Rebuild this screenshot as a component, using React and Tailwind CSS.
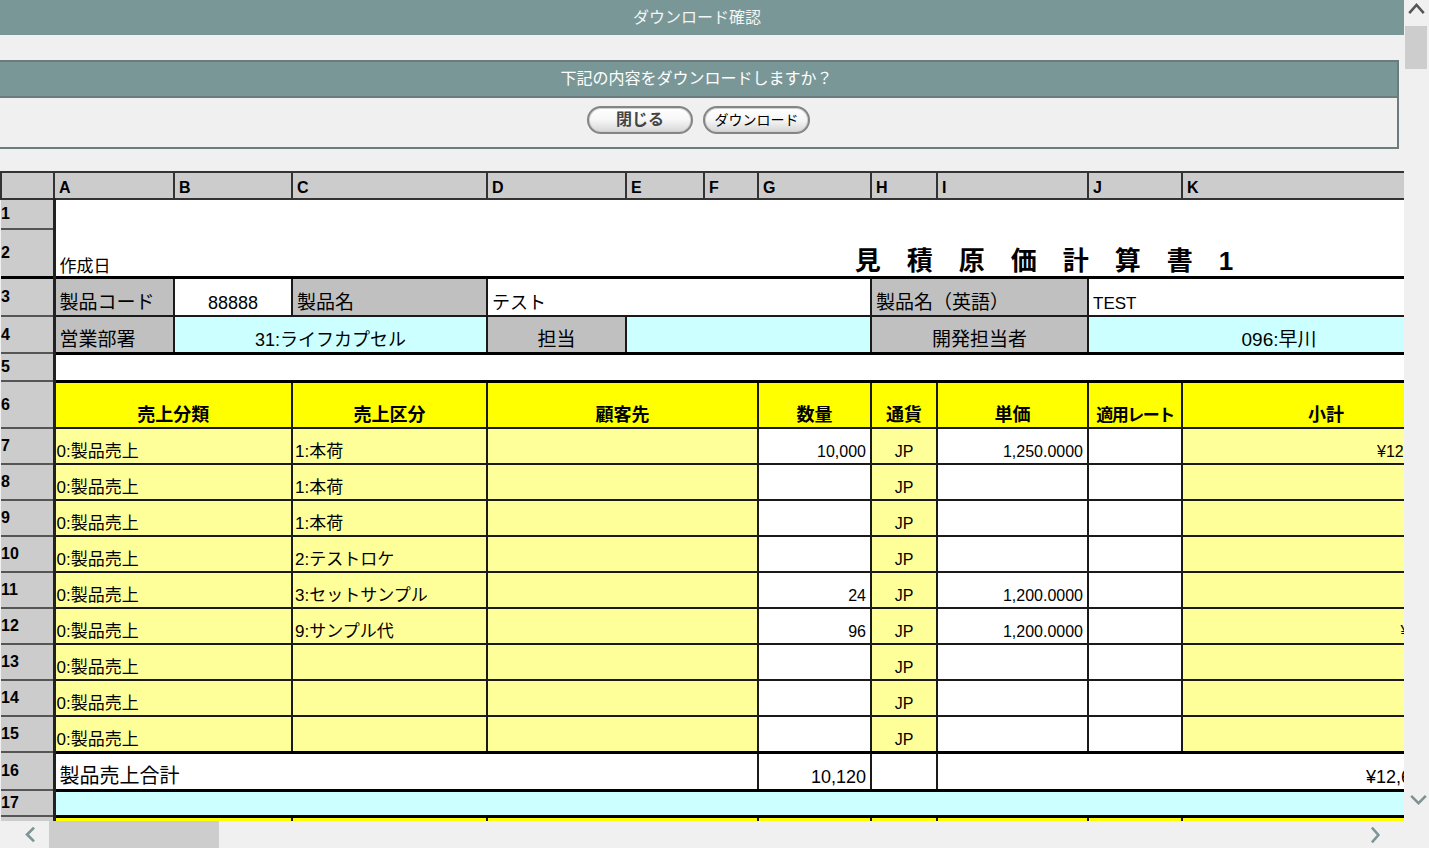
const LETTERS = ["A", "B", "C", "D", "E", "F", "G", "H", "I", "J", "K"];

const LINES = [
  ["0:製品売上", "1:本荷", "10,000", "1,250.0000", "¥12,500,000"],
  ["0:製品売上", "1:本荷", "", "", ""],
  ["0:製品売上", "1:本荷", "", "", ""],
  ["0:製品売上", "2:テストロケ", "", "", ""],
  ["0:製品売上", "3:セットサンプル", "24", "1,200.0000", "¥28,800"],
  ["0:製品売上", "9:サンプル代", "96", "1,200.0000", "¥115,200"],
  ["0:製品売上", "", "", "", ""],
  ["0:製品売上", "", "", "", ""],
  ["0:製品売上", "", "", "", ""],
];

const cell = "border-2 border-[#1a1a1a] align-bottom px-[4px] pb-[3px] leading-none whitespace-nowrap overflow-hidden";
const gray = "bg-[#c0c0c0]";
const cyan = "bg-[#ccffff]";
const yellow = "bg-[#ffff00]";
const pale = "bg-[#ffff99]";

function RowHead({ n }) {
  return (
    <td className="bg-[#cccccc] border-y-2 border-y-[#555] border-r-[3px] border-r-[#222] pl-0 text-[16px] font-bold align-middle leading-none">
      {n}
    </td>
  );
}

function Chevron({ d, className }) {
  return (
    <svg viewBox="0 0 20 20" className={className} fill="none" strokeLinecap="square" strokeLinejoin="miter">
      <polyline points={d} stroke="currentColor" strokeWidth="3.2" />
    </svg>
  );
}

export default function App() {
  return (
    <div className="w-[1429px] h-[848px] flex overflow-hidden bg-[#f0f0f0] font-['Liberation_Sans','Noto_Sans_CJK_JP',sans-serif]">
      <div className="flex-1 min-w-0 flex flex-col">
        <div className="flex-1 min-h-0 overflow-hidden">

          {/* title bar */}
          <div className="h-[35px] bg-[#7a9797] flex items-center justify-center pr-[10px] text-[16px] text-[#f4f4f4]">
            ダウンロード確認
          </div>
          <div className="h-[25px]" />

          {/* confirm box */}
          <div className="mr-[5px] border-y-2 border-r-2 border-[#6c7c7c]">
            <div className="h-[36px] bg-[#7a9797] border-b-2 border-[#6c7c7c] flex items-center justify-center pr-[4px] text-[16px] text-white">
              下記の内容をダウンロードしますか？
            </div>
            <div className="h-[49px] flex justify-center gap-[10px] pt-[8px]">
              <button className="w-[106px] h-[28px] rounded-full border-2 border-[#858585] bg-linear-to-b from-white via-[#f6f6f6] to-[#d6d6d6] shadow-[inset_0_0_0_1px_#d0d0d0] text-[16px] font-bold text-[#444] leading-none">
                閉じる
              </button>
              <button className="w-[107px] h-[28px] rounded-full border-2 border-[#858585] bg-linear-to-b from-white via-[#f6f6f6] to-[#d6d6d6] shadow-[inset_0_0_0_1px_#d0d0d0] text-[14px] text-black leading-none">
                ダウンロード
              </button>
            </div>
          </div>
          <div className="h-[22px]" />

          {/* sheet */}
          <table className="table-fixed border-collapse w-[1469px] text-black">
            <colgroup>
              <col className="w-[53px]" />
              <col className="w-[120px]" />
              <col className="w-[118px]" />
              <col className="w-[195px]" />
              <col className="w-[139px]" />
              <col className="w-[78px]" />
              <col className="w-[54px]" />
              <col className="w-[113px]" />
              <col className="w-[66px]" />
              <col className="w-[151px]" />
              <col className="w-[94px]" />
              <col className="w-[288px]" />
            </colgroup>
            <tbody>
              <tr className="h-[27px]">
                <td className="bg-[#cccccc] border-2 border-[#333]" />
                {LETTERS.map((l) => (
                  <td key={l} className="bg-[#cccccc] border-2 border-[#333] pl-[4px] pt-[5px] text-[16px] font-bold leading-none align-middle">
                    {l}
                  </td>
                ))}
              </tr>

              <tr className="h-[30px]">
                <RowHead n="1" />
                <td colSpan={11} className="bg-white" />
              </tr>

              <tr className="h-[48px]">
                <RowHead n="2" />
                <td colSpan={4} className="bg-white align-bottom px-[4px] pb-[1px] text-[17px] leading-none">作成日</td>
                <td colSpan={7} className="bg-white align-bottom text-center pr-[8px] pb-[2px] text-[26px] font-bold leading-none">
                  見　積　原　価　計　算　書　1
                </td>
              </tr>

              <tr className="h-[39px] border-t-[3px] border-t-black">
                <RowHead n="3" />
                <td className={`${cell} ${gray} border-t-[3px] border-t-black text-[19px] pb-0`}>製品コード</td>
                <td className={`${cell} bg-white border-t-[3px] border-t-black text-center text-[18px] pb-[1px]`}>88888</td>
                <td className={`${cell} ${gray} border-t-[3px] border-t-black text-[19px] pb-0`}>製品名</td>
                <td colSpan={4} className={`${cell} bg-white border-t-[3px] border-t-black text-[18px] pb-0`}>テスト</td>
                <td colSpan={2} className={`${cell} ${gray} border-t-[3px] border-t-black text-[19px] pb-0`}>製品名（英語）</td>
                <td colSpan={2} className={`${cell} bg-white border-t-[3px] border-t-black text-[17px] pb-[1px]`}>TEST</td>
              </tr>

              <tr className="h-[37px]">
                <RowHead n="4" />
                <td className={`${cell} ${gray} border-b-[3px] border-b-black text-[19px] pb-0`}>営業部署</td>
                <td colSpan={2} className={`${cell} ${cyan} border-b-[3px] border-b-black text-center text-[18px] pb-0`}>31:ライフカプセル</td>
                <td className={`${cell} ${gray} border-b-[3px] border-b-black text-center text-[19px] pb-0`}>担当</td>
                <td colSpan={3} className={`${cell} ${cyan} border-b-[3px] border-b-black`} />
                <td colSpan={2} className={`${cell} ${gray} border-b-[3px] border-b-black text-center text-[19px] pb-0`}>開発担当者</td>
                <td colSpan={2} className={`${cell} ${cyan} border-b-[3px] border-b-black text-center text-[19px] pb-0`}>096:早川</td>
              </tr>

              <tr className="h-[28px]">
                <RowHead n="5" />
                <td colSpan={11} className="bg-white border-l-[3px] border-l-black" />
              </tr>

              <tr className="h-[47px]">
                <RowHead n="6" />
                <td colSpan={2} className={`${cell} ${yellow} border-t-[3px] border-t-black text-center text-[18px] font-bold pb-0`}>売上分類</td>
                <td className={`${cell} ${yellow} border-t-[3px] border-t-black text-center text-[18px] font-bold pb-0`}>売上区分</td>
                <td colSpan={3} className={`${cell} ${yellow} border-t-[3px] border-t-black text-center text-[18px] font-bold pb-0`}>顧客先</td>
                <td className={`${cell} ${yellow} border-t-[3px] border-t-black text-center text-[18px] font-bold pb-0`}>数量</td>
                <td className={`${cell} ${yellow} border-t-[3px] border-t-black text-center text-[18px] font-bold pb-0`}>通貨</td>
                <td className={`${cell} ${yellow} border-t-[3px] border-t-black text-center text-[18px] font-bold pb-0`}>単価</td>
                <td className={`${cell} ${yellow} border-t-[3px] border-t-black text-center text-[17px] font-bold px-0 pb-0 tracking-[-1.5px]`}>適用レート</td>
                <td className={`${cell} ${yellow} border-t-[3px] border-t-black text-center text-[18px] font-bold pb-0`}>小計</td>
              </tr>

              {LINES.map(([kind, sub, qty, price, total], i) => (
                <tr key={i} className="h-[36px]">
                  <RowHead n={String(7 + i)} />
                  <td colSpan={2} className={`${cell} ${pale} pl-[1px] text-[17px] pb-[1px]`}>{kind}</td>
                  <td className={`${cell} ${pale} pl-[2px] text-[17px] pb-[1px]`}>{sub}</td>
                  <td colSpan={3} className={`${cell} ${pale}`} />
                  <td className={`${cell} bg-white text-right text-[16px] pb-[2px]`}>{qty}</td>
                  <td className={`${cell} ${pale} text-center text-[16px] pb-[2px]`}>JP</td>
                  <td className={`${cell} bg-white text-right text-[16px] pb-[2px]`}>{price}</td>
                  <td className={`${cell} bg-white`} />
                  <td className={`${cell} ${pale} text-right text-[16px] pr-[3px] pb-[2px]`}>{total}</td>
                </tr>
              ))}

              <tr className="h-[38px]">
                <RowHead n="16" />
                <td colSpan={6} className={`${cell} bg-white border-y-[3px] border-y-black text-[20px] pb-0`}>製品売上合計</td>
                <td className={`${cell} bg-white border-y-[3px] border-y-black text-right text-[18px] pb-[1px]`}>10,120</td>
                <td className={`${cell} bg-white border-y-[3px] border-y-black`} />
                <td colSpan={3} className={`${cell} bg-white border-y-[3px] border-y-black text-right text-[18px] pr-[3px] pb-[1px]`}>¥12,644,000</td>
              </tr>

              <tr className="h-[26px]">
                <RowHead n="17" />
                <td colSpan={11} className={`${cell} ${cyan} border-y-[3px] border-y-black`} />
              </tr>

              <tr className="h-[36px]">
                <RowHead n="18" />
                <td colSpan={2} className={`${cell} ${yellow}`} />
                <td className={`${cell} ${yellow}`} />
                <td colSpan={3} className={`${cell} ${yellow}`} />
                <td className={`${cell} ${yellow}`} />
                <td className={`${cell} ${yellow}`} />
                <td className={`${cell} ${yellow}`} />
                <td className={`${cell} ${yellow}`} />
                <td className={`${cell} ${yellow}`} />
              </tr>
            </tbody>
          </table>
        </div>

        {/* horizontal scrollbar */}
        <div className="h-[27px] shrink-0 flex items-stretch bg-[#f0f0f0]">
          <div className="w-[49px] flex items-center justify-center pl-[12px] text-[#7d9595]">
            <Chevron d="13,3 6,10 13,17" className="w-[17px] h-[17px]" />
          </div>
          <div className="w-[170px] bg-[#cdcdcd]" />
          <div className="flex-1" />
          <div className="w-[50px] flex items-center justify-start pl-[14px] text-[#7d9595]">
            <Chevron d="6,2 13,10 6,18" className="w-[16px] h-[20px]" />
          </div>
        </div>
      </div>

      {/* vertical scrollbar */}
      <div className="w-[25px] shrink-0 flex flex-col bg-[#f0f0f0]">
        <div className="h-[18px] flex items-start justify-center pt-[1px] text-[#555]">
          <Chevron d="2,14 10,5 18,14" className="w-[19px] h-[16px]" />
        </div>
        <div className="mt-[8px] ml-[1px] w-[22px] h-[43px] bg-[#cdcdcd]" />
        <div className="flex-1" />
        <div className="h-[18px] flex items-center justify-center pl-[4px] text-[#7f9191]">
          <Chevron d="2,6 10,14 18,6" className="w-[19px] h-[16px]" />
        </div>
        <div className="h-[39px]" />
      </div>
    </div>
  );
}
